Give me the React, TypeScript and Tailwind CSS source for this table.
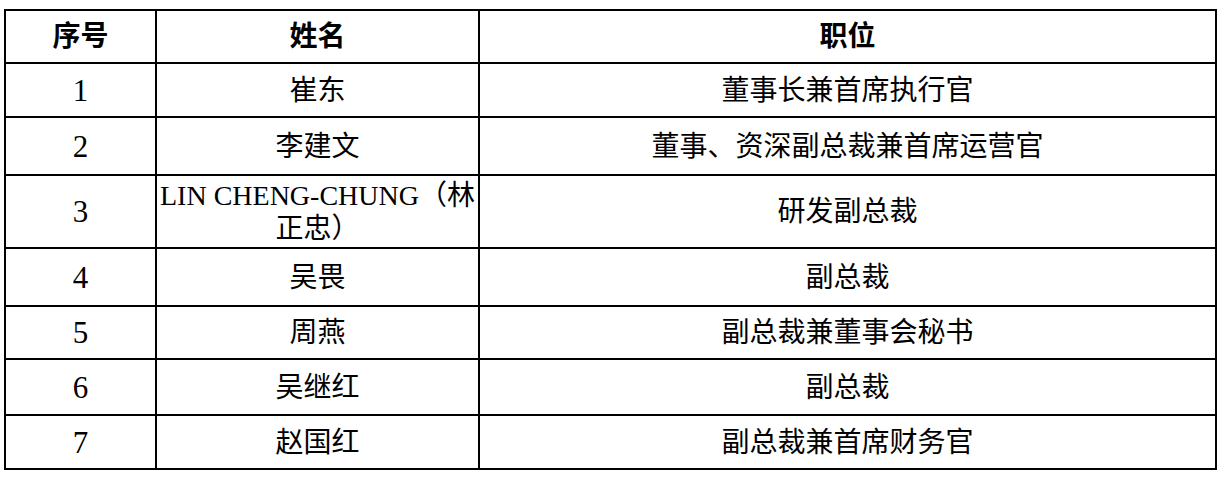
const rows = [
  { no: "1", name: "崔东", title: "董事长兼首席执行官", h: "h-[54px]" },
  { no: "2", name: "李建文", title: "董事、资深副总裁兼首席运营官", h: "h-[58px]" },
  { no: "3", name: "LIN CHENG-CHUNG（林正忠）", title: "研发副总裁", h: "h-[73px]" },
  { no: "4", name: "吴畏", title: "副总裁", h: "h-[58px]" },
  { no: "5", name: "周燕", title: "副总裁兼董事会秘书", h: "h-[53px]" },
  { no: "6", name: "吴继红", title: "副总裁", h: "h-[56px]" },
  { no: "7", name: "赵国红", title: "副总裁兼首席财务官", h: "h-[54px]" },
];

export default function App() {
  return (
    <div className="w-[1220px] h-[482px] bg-white pt-[9px] pl-[4px] text-black font-['Liberation_Serif','Noto_Sans_CJK_SC',serif] text-[28px] leading-[33px]">
      <table className="w-[1211px] table-fixed border-collapse">
        <colgroup>
          <col className="w-[151px]" />
          <col className="w-[323px]" />
          <col className="w-[737px]" />
        </colgroup>
        <thead>
          <tr className="h-[53px]">
            <th className="border-2 border-black font-bold text-center">序号</th>
            <th className="border-2 border-black font-bold text-center">姓名</th>
            <th className="border-2 border-black font-bold text-center">职位</th>
          </tr>
        </thead>
        <tbody>
          {rows.map((r) => (
            <tr key={r.no} className={r.h}>
              <td className="border-2 border-black text-center text-[31px]">{r.no}</td>
              <td className="border-2 border-black text-center px-[3px]">{r.name}</td>
              <td className="border-2 border-black text-center">{r.title}</td>
            </tr>
          ))}
        </tbody>
      </table>
    </div>
  );
}
